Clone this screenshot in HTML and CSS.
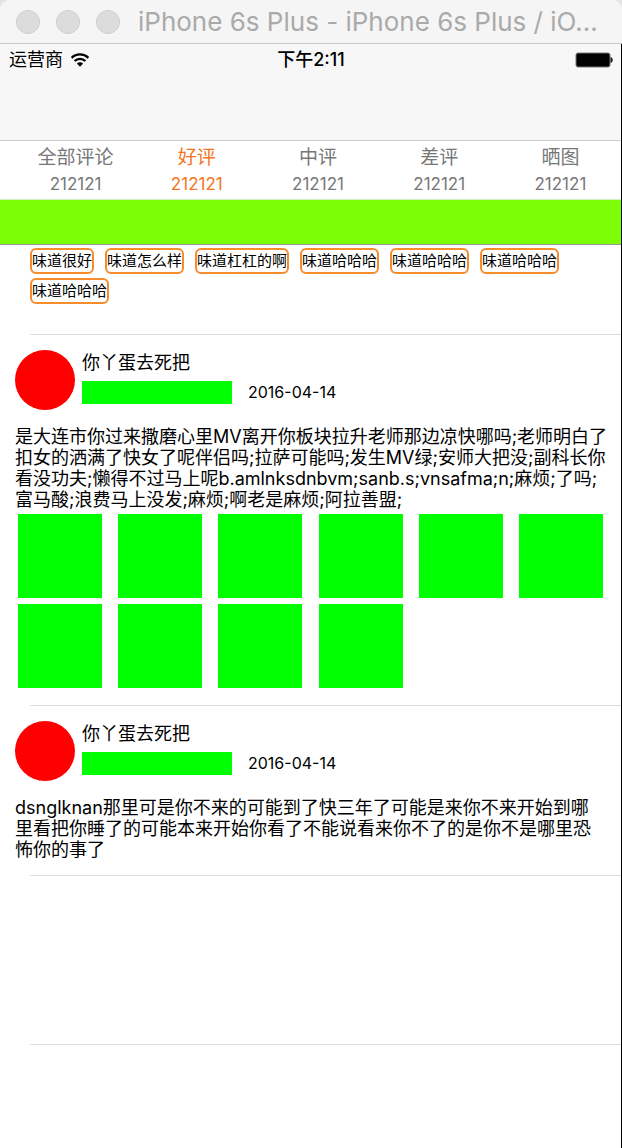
FILE: index.html
```html
<!DOCTYPE html>
<html lang="zh-CN">
<head>
<meta charset="utf-8">
<meta name="viewport" content="width=device-width, initial-scale=1">
<title>iPhone 6s Plus</title>
<link rel="stylesheet" href="styles.css">
</head>
<body>
<div class="window">
  <header class="titlebar">
    <div class="lights">
      <button class="light" type="button" aria-label="关闭"></button>
      <button class="light" type="button" aria-label="最小化"></button>
      <button class="light" type="button" aria-label="缩放"></button>
    </div>
    <h1 class="title">iPhone 6s Plus - iPhone 6s Plus / iO...</h1>
  </header>

  <div class="screen">
    <div class="navbar">
      <div class="status">
        <div class="carrier">
          <span>运营商</span>
          <svg class="wifi" viewBox="0 0 20 14" aria-hidden="true">
            <path d="M1.6 4.9a12 12 0 0 1 16.8 0M4.6 8a7.700 7.700 0 0 1 10.800 0" fill="none" stroke="#000" stroke-width="2.300"/>
            <path d="M10 13.800L6.900 10.600a4.400 4.400 0 0 1 6.200 0z"/>
          </svg>
        </div>
        <span class="clock">下午2:11</span>
        <div class="power">
          <svg class="battery" viewBox="0 0 38 16" aria-hidden="true">
            <rect x="1" y="1" width="34" height="14" rx="2" fill="#000" stroke="#777"/>
            <path d="M35.500 5c3 .5 3 5.500 0 6z" fill="#222"/>
          </svg>
        </div>
      </div>
    </div>

    <main>
      <nav class="tabs">
        <button class="tab" type="button"><span class="tab-name">全部评论</span><span class="tab-count">212121</span></button>
        <button class="tab active" type="button"><span class="tab-name">好评</span><span class="tab-count">212121</span></button>
        <button class="tab" type="button"><span class="tab-name">中评</span><span class="tab-count">212121</span></button>
        <button class="tab" type="button"><span class="tab-name">差评</span><span class="tab-count">212121</span></button>
        <button class="tab" type="button"><span class="tab-name">晒图</span><span class="tab-count">212121</span></button>
      </nav>
      <div class="banner"></div>
      <section class="tags">
        <button class="tag" type="button">味道很好</button>
        <button class="tag" type="button">味道怎么样</button>
        <button class="tag" type="button">味道杠杠的啊</button>
        <button class="tag" type="button">味道哈哈哈</button>
        <button class="tag" type="button">味道哈哈哈</button>
        <button class="tag" type="button">味道哈哈哈</button>
        <button class="tag" type="button">味道哈哈哈</button>
      </section>

      <article class="review">
        <div class="author">
          <div class="avatar"></div>
          <div class="info">
            <h2 class="name">你丫蛋去死把</h2>
            <div class="meta"><div class="rating"></div><time class="date">2016-04-14</time></div>
          </div>
        </div>
        <p class="text">是大连市你过来撒磨心里MV离开你板块拉升老师那边凉快哪吗;老师明白了<br>扣女的洒满了快女了呢伴侣吗;拉萨可能吗;发生MV绿;安师大把没;副科长你<br>看没功夫;懒得不过马上呢b.amlnksdnbvm;sanb.s;vnsafma;n;麻烦;了吗;<br>富马酸;浪费马上没发;麻烦;啊老是麻烦;阿拉善盟;</p>
        <div class="photos">
          <div class="photo"></div><div class="photo"></div><div class="photo"></div><div class="photo"></div><div class="photo"></div>
          <div class="photo"></div><div class="photo"></div><div class="photo"></div><div class="photo"></div><div class="photo"></div>
        </div>
      </article>

      <article class="review">
        <div class="author">
          <div class="avatar"></div>
          <div class="info">
            <h2 class="name">你丫蛋去死把</h2>
            <div class="meta"><div class="rating"></div><time class="date">2016-04-14</time></div>
          </div>
        </div>
        <p class="text">dsnglknan那里可是你不来的可能到了快三年了可能是来你不来开始到哪<br>里看把你睡了的可能本来开始你看了不能说看来你不了的是你不是哪里恐<br>怖你的事了</p>
      </article>
      <div class="empty-row"></div>
    </main>
  </div>
</div>
</body>
</html>
```

FILE: styles.css
```css
* { box-sizing: border-box; }

body {
  margin: 0;
  background: #e4e4e4;
  color: #000;
  font-family: Inter, "Noto Sans CJK SC", sans-serif;
}

button {
  margin: 0;
  padding: 0;
  border: 0;
  background: none;
  color: inherit;
  font: inherit;
}

.window {
  display: flex;
  flex-direction: column;
  min-height: 100vh;
  border-radius: 10px 10px 0 0;
  overflow: hidden;
  background: #fff;
}

.titlebar {
  display: flex;
  align-items: center;
  gap: 18px;
  height: 44px;
  padding: 0 16px;
  border-bottom: 1px solid #c8c8c8;
  background: #f5f5f5;
}

.lights { display: flex; gap: 16px; }

.light {
  width: 24px;
  height: 24px;
  border: 1px solid #cdcdcd;
  border-radius: 50%;
  background: #dcdcdc;
}

.title {
  margin: 0;
  color: #aaa;
  font-size: 26px;
  font-weight: 400;
  line-height: 32px;
  white-space: nowrap;
}

.screen {
  flex: 1;
  border-right: 1px solid #000;
}

.navbar {
  height: 97px;
  border-bottom: 1px solid #ccc;
  background: #f7f7f7;
}

.status {
  display: grid;
  grid-template-columns: 1fr auto 1fr;
  align-items: center;
  height: 32px;
  padding: 0 8px 0 9px;
  font-size: 18px;
  line-height: 24px;
}

.carrier { display: flex; align-items: center; gap: 7px; }
.wifi { width: 20px; height: 14px; }
.clock { font-weight: 500; }
.power { display: flex; justify-content: flex-end; }
.battery { width: 38px; height: 16px; }

.tabs {
  display: grid;
  grid-template-columns: repeat(5, 1fr);
  height: 58px;
  padding-left: 15px;
  color: #777;
}

.tab {
  display: flex;
  flex-direction: column;
  align-items: center;
  padding-top: 2px;
}

.tab-name { font-size: 19px; line-height: 30px; }
.tab-count { font-size: 17px; line-height: 23px; }
.active { color: #f47521; }

.banner {
  height: 46px;
  border-top: 1px solid #d5edc0;
  border-bottom: 1px solid #999;
  background: #7cff06;
}

.tags {
  display: flex;
  flex-wrap: wrap;
  align-content: flex-start;
  gap: 4px 11px;
  min-height: 89px;
  padding: 3px 30px;
}

.tag {
  height: 26px;
  border: 2px solid #f68c2c;
  border-radius: 6px;
  font-size: 15px;
  line-height: 22px;
}

.review, .empty-row {
  padding: 15px;
  background: linear-gradient(#ddd, #ddd) 30px 0 / 100% 1px no-repeat;
}

.author { display: flex; gap: 7px; padding-top: 1px; }

.avatar {
  flex: none;
  width: 60px;
  height: 60px;
  border-radius: 50%;
  background: #f00;
}

.name {
  margin: 0;
  font-size: 18px;
  font-weight: 400;
  line-height: 26px;
}

.meta { display: flex; align-items: center; gap: 16px; margin-top: 5px; }
.rating { width: 150px; height: 23px; background: #0f0; }
.date { font-size: 16px; line-height: 23px; }

.text {
  margin: 16px 0 0;
  font-size: 18px;
  line-height: 21px;
  white-space: nowrap;
}

.photos {
  display: grid;
  grid-template-columns: repeat(6, 84px);
  justify-content: space-between;
  row-gap: 6px;
  padding: 4px 3px 2px;
}

.photo { height: 84px; background: #0f0; }

.empty-row {
  min-height: 170px;
  background: linear-gradient(#ddd, #ddd) 30px 0 / 100% 1px no-repeat,
    linear-gradient(#ddd, #ddd) 30px 100% / 100% 1px no-repeat;
}
```
